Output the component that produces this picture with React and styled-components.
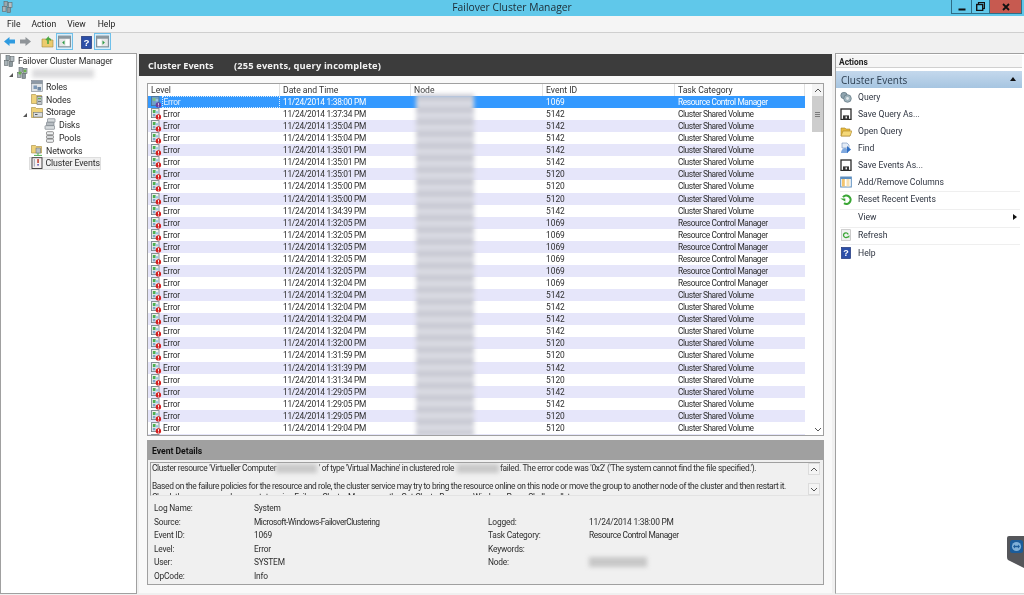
import React from "react";
import styled, { createGlobalStyle } from "styled-components";

const Global = createGlobalStyle`
  html, body { margin: 0; padding: 0; width: 1024px; height: 595px; overflow: hidden; background: #f0f0f0; }
  #root { width: 1024px; height: 595px; }
  * { box-sizing: border-box; }
`;

const Window = styled.div`
  position: relative; width: 1024px; height: 595px; overflow: hidden;
  background: #f0f0f0; color: #222; filter: blur(0.3px);
  font-family: Roboto, "Open Sans", "Liberation Sans", sans-serif;
  font-size: 8.4px; line-height: 12px;
`;
const TitleBar = styled.div`
  position: absolute; left: 0; top: 0; width: 1024px; height: 16px; background: #60c8ea;
  text-align: center; font-size: 10.3px; line-height: 15px; color: #1c2a33;
  font-family: "Open Sans", sans-serif;
`;
const TitleIcon = styled.span`position: absolute; left: 2px; top: 1px; width: 12px; height: 12px;`;
const WindowButtons = styled.div`
  position: absolute; left: 951px; top: 0; width: 71px; height: 14px; display: flex;
  border: 1px solid #2e6d86; border-top: 0;
`;
const WindowButton = styled.span`
  width: ${p => p.$w}px; background: ${p => p.$bg}; display: flex; align-items: center; justify-content: center;
  border-right: ${p => p.$last ? 0 : "1px solid #2e6d86"};
`;
const MenuBar = styled.div`
  position: absolute; left: 0; top: 16px; width: 1024px; height: 17px; background: #f5f5f5;
  border-bottom: 1px solid #cfcfcf; display: flex; padding-left: 7px; font-size: 8.6px; line-height: 16px;
`;
const MenuItem = styled.span`margin-right: ${p => p.$gap}px;`;
const Toolbar = styled.div`position: absolute; left: 0; top: 33px; width: 1024px; height: 20px; background: #f0f0f0;`;
const ToolSlot = styled.span`
  position: absolute; left: ${p => p.$x}px; top: ${p => p.$y ?? 0}px; width: ${p => p.$w ?? 16}px; height: ${p => p.$w ?? 16}px;
  display: block;
  ${p => p.$on ? "background:#d8eefa;border:1px solid #6fc0ea;" : ""}
`;
const TreePanel = styled.div`
  position: absolute; left: 0; top: 53px; width: 137px; height: 541px; background: #fff;
  border: 1px solid #a0a0a0;
`;
const TreeRow = styled.div`
  position: absolute; left: ${p => p.$x}px; top: ${p => p.$y}px; white-space: nowrap; height: 13px; line-height: 13px;
  font-size: 8.8px; color: #2a2a2a; letter-spacing: -0.12px;
`;
const TreeSelection = styled.div`
  position: absolute; left: 28px; top: 103px; width: 72px; height: 13px; background: #f0f0f0; border: 1px solid #dedede;
`;
const TreeIcon = styled.span`position: absolute; left: ${p => p.$x}px; top: ${p => p.$y}px; width: 12px; height: 12px; display: block;`;
const Expander = styled.span`
  position: absolute; left: ${p => p.$x}px; top: ${p => p.$y}px; width: 0; height: 0;
  border-left: 4px solid transparent; border-bottom: 4px solid #555;
`;
const Blur = styled.span`
  position: absolute; left: ${p => p.$x}px; top: ${p => p.$y}px; width: ${p => p.$w}px; height: ${p => p.$h}px;
  background: ${p => p.$c ?? "#c9c9cd"}; filter: blur(2px);
`;
const NodeSmear = styled.div`
  position: absolute; left: 268px; top: 10px; width: 58px; height: 342px; filter: blur(2px);
  background: repeating-linear-gradient(#d2d3dc 0, #c4c5cf 5px, #e2e3ea 9px, #d2d3dc 12px);
`;
const Center = styled.div`position: absolute; left: 139px; top: 54px; width: 693px; height: 541px; background: #f0f0f0;`;
const Banner = styled.div`
  position: absolute; left: 0; top: 0; width: 693px; height: 22px; background: #3c3c3c; color: #f2f2f2;
  font-family: "Open Sans", sans-serif; font-weight: 700; font-size: 9.2px; line-height: 24px; padding-left: 9px; white-space: pre;
`;
const BannerNote = styled.span`position: absolute; left: 95px; top: 0; letter-spacing: 0.15px; font-size: 9.3px;`;
const Content = styled.div`position: absolute; left: 0; top: 22px; width: 693px; height: 517px; background: #f9f9f9;`;
const TableBox = styled.div`
  position: absolute; left: 8px; top: 7px; width: 677px; height: 353px; border: 1px solid #a0a0a0; background: #fff; overflow: hidden;
`;
const HeaderCell = styled.div`
  position: absolute; top: 0; left: ${p => p.$x}px; width: ${p => p.$w}px; height: 12px; line-height: 12px;
  padding-left: 3px; background: #fff; border-right: 1px solid #e2e2e2; font-size: 8.6px; color: #333;
`;
const Row = styled.div`
  position: absolute; left: 0; top: ${p => p.$y}px; width: 657px; height: 12px; line-height: 12.5px; font-size: 8.4px; overflow: hidden;
  background: ${p => p.$sel ? "#3399ff" : p.$alt ? "#e6e6fa" : "#fff"};
  color: ${p => p.$sel ? "#fff" : "#2e2e2e"};
`;
const Cell = styled.span`position: absolute; left: ${p => p.$x}px; top: 0; white-space: nowrap; letter-spacing: ${p => p.$ls ?? 0}px;`;
const SelText = styled.span`
  position: absolute; left: 14px; top: 0; width: 118px; height: 12px; line-height: 11px; padding-left: 0.5px; color: #e8f2ff; letter-spacing: -0.2px;
  border: 1px dotted #d9ecff;
`;
const RowIcon = styled.svg`position: absolute; left: 3px; top: 0; width: 12px; height: 12px; z-index: 2;`;
const Scroll = styled.div`
  position: absolute; left: ${p => p.$x}px; top: ${p => p.$y}px; width: ${p => p.$w}px; height: ${p => p.$h}px;
  background: ${p => p.$bg ?? "#fff"}; border: ${p => p.$b ?? 0};
  display: flex; align-items: center; justify-content: center;
`;
const Details = styled.div`
  position: absolute; left: 8px; top: 364px; width: 677px; height: 145px; background: #f0f0f0; border: 1px solid #a0a0a0;
`;
const DetailHead = styled.div`
  position: absolute; left: 0; top: 0; width: 675px; height: 19px; background: #a0a0a0; color: #111; font-weight: 700;
  font-size: 8.6px; line-height: 20px; padding-left: 4px;
`;
const Message = styled.div`
  position: absolute; left: 2px; top: 21px; width: 670px; height: 34px; overflow: hidden; background: #f0f0f0;
  border-top: 1px solid #a0a0a0; border-left: 1px solid #a0a0a0; border-bottom: 1px solid #e3e3e3;
  font-size: 8.4px; line-height: 9px; color: #2e2e2e;
`;
const MessageLine = styled.div`
  position: absolute; left: ${p => p.$x ?? 1}px; top: ${p => p.$y}px; white-space: nowrap; letter-spacing: ${p => p.$ls ?? -0.3}px;
`;
const Field = styled.div`
  position: absolute; left: ${p => p.$x}px; top: ${p => p.$y}px; white-space: nowrap; font-size: 8.4px; color: #2e2e2e; letter-spacing: ${p => p.$ls ?? -0.2}px;
`;
const Actions = styled.div`
  position: absolute; left: 835px; top: 53px; width: 189px; height: 541px; background: #fff;
  border: 1px solid #a0a0a0; border-right: 0; border-bottom: 1px solid #d8d8d8;
`;
const ActionsTitle = styled.div`
  position: absolute; left: 0; top: 1px; width: 186px; height: 13px; background: #f5f5f5; font-weight: 700; font-size: 8.4px; line-height: 14px;
  padding-left: 3px; color: #222; border-bottom: 1px solid #d0d0d0;
`;
const ActionsHead = styled.div`
  position: absolute; left: 0; top: 17px; width: 186px; height: 17px; background: linear-gradient(#c4d8ec, #a6c5e1);
  font-family: "Open Sans", sans-serif; font-size: 10px; line-height: 18px; padding-left: 5px; color: #2c3e50;
`;
const UpTri = styled.span`
  position: absolute; left: 174px; top: 6px; width: 0; height: 0; border-left: 3.5px solid transparent; border-right: 3.5px solid transparent; border-bottom: 4px solid #111;
`;
const ActionRow = styled.div`
  position: absolute; left: 22px; top: ${p => p.$y}px; height: 12px; line-height: 12px; white-space: nowrap; font-size: 8.6px; color: #2e3440;
`;
const ActionIcon = styled.span`position: absolute; left: 4px; top: ${p => p.$y}px; width: 12px; height: 12px; display: block;`;
const ActionSep = styled.div`position: absolute; left: 4px; top: ${p => p.$y}px; width: 180px; height: 1px; background: #efefef;`;
const RightTri = styled.span`
  position: absolute; left: 177px; top: 160px; width: 0; height: 0; border-top: 3px solid transparent; border-bottom: 3px solid transparent; border-left: 4px solid #111;
`;
const Badge = styled.svg`position: absolute; left: 1006px; top: 536px; width: 18px; height: 33px;`;

const I = ({ children, s = 12 }) => <svg width={s} height={s} viewBox="0 0 12 12" style={{ display: "block" }}>{children}</svg>;

const Servers = () => <I>
  <rect x="2" y="0.5" width="3.5" height="5" fill="#9aa7ad" stroke="#5f686c" strokeWidth=".6"/>
  <rect x="6.5" y="1.5" width="3.5" height="5" fill="#b6bfc3" stroke="#5f686c" strokeWidth=".6"/>
  <rect x="0.5" y="5.5" width="3.5" height="5" fill="#aab4b8" stroke="#5f686c" strokeWidth=".6"/>
  <rect x="5" y="6.5" width="3.5" height="5" fill="#8d999e" stroke="#5f686c" strokeWidth=".6"/>
</I>;
const ServersGreen = () => <I>
  <rect x="2" y="0.5" width="3.5" height="5" fill="#9aa7ad" stroke="#5f686c" strokeWidth=".6"/>
  <rect x="6.5" y="1.5" width="3.5" height="5" fill="#b6bfc3" stroke="#5f686c" strokeWidth=".6"/>
  <rect x="0.5" y="5.5" width="3.5" height="5" fill="#aab4b8" stroke="#5f686c" strokeWidth=".6"/>
  <rect x="5" y="6.5" width="3.5" height="5" fill="#8d999e" stroke="#5f686c" strokeWidth=".6"/>
  <circle cx="3" cy="6" r="1.6" fill="#6ab04c"/><circle cx="8" cy="4" r="1.4" fill="#6ab04c"/>
</I>;
const RolesIcon = () => <I>
  <rect x="0.5" y="0.5" width="11" height="3.2" fill="#8d99a6" stroke="#6e7780" strokeWidth=".5"/>
  <rect x="0.5" y="3.5" width="11" height="8" fill="#dfe3e6" stroke="#7b848c" strokeWidth=".6"/>
  <rect x="2.5" y="5.5" width="3.5" height="3.5" fill="#7d98b5"/><rect x="6.5" y="7" width="3.5" height="3.5" fill="#6f88a3"/>
</I>;
const NodesIcon = () => <I>
  <path d="M.5 1.5h4l1 1h5v8H.5z" fill="#efd27a" stroke="#a58a3c" strokeWidth=".6"/>
  <rect x="6" y="3.5" width="5" height="8" fill="#c2c8cc" stroke="#5f686c" strokeWidth=".6"/>
  <rect x="7" y="5" width="3" height="1.2" fill="#6ab04c"/><rect x="7" y="8" width="3" height="1" fill="#777"/>
</I>;
const StorageIcon = () => <I>
  <path d="M.5 1.5h4l1 1h6v9H.5z" fill="#efd27a" stroke="#a58a3c" strokeWidth=".6"/>
  <rect x="2.5" y="6.5" width="9" height="4.5" fill="#d8dcdf" stroke="#6e7780" strokeWidth=".6"/>
  <rect x="4" y="8" width="2.5" height="1" fill="#555"/>
</I>;
const DisksIcon = () => <I>
  <rect x="3.5" y="0.7" width="7.5" height="3.6" rx=".5" fill="#d8dcdf" stroke="#6e7780" strokeWidth=".6"/>
  <rect x="2.5" y="4.2" width="7.5" height="3.6" rx=".5" fill="#b6bcc1" stroke="#6e7780" strokeWidth=".6"/>
  <rect x="1" y="7.7" width="9.5" height="3.6" rx=".5" fill="#d8dcdf" stroke="#6e7780" strokeWidth=".6"/>
</I>;
const PoolsIcon = () => <I>
  <rect x="2.5" y="0.7" width="7" height="3.2" rx="1" fill="#eef0f1" stroke="#666" strokeWidth=".7"/>
  <rect x="2.5" y="4.4" width="7" height="3.2" rx="1" fill="#d5d8da" stroke="#666" strokeWidth=".7"/>
  <rect x="2.5" y="8.1" width="7" height="3.2" rx="1" fill="#eef0f1" stroke="#666" strokeWidth=".7"/>
</I>;
const NetworksIcon = () => <I>
  <path d="M.5 1.5h4l1 1h5v6.5H.5z" fill="#efd27a" stroke="#a58a3c" strokeWidth=".6"/>
  <rect x="5" y="4" width="4.5" height="5" fill="#b9c0c4" stroke="#5f686c" strokeWidth=".5"/>
  <path d="M7 9v2M3 11.4h8" stroke="#4caf50" strokeWidth="1"/>
</I>;
const EventsIcon = () => <I>
  <rect x="1" y="0.7" width="10" height="10.8" fill="#f6f1f1" stroke="#333" strokeWidth=".9"/>
  <rect x="2.8" y="2" width="1" height="7.5" fill="#9aa0b0"/>
  <rect x="6.3" y="2" width="1.5" height="4" fill="#c0392b"/>
  <rect x="6.3" y="7" width="1.5" height="1.6" fill="#5b4fb0"/>
</I>;

const HelpIcon = ({ s = 12 }) => <svg width={s} height={s} viewBox="0 0 12 12" style={{ display: "block" }}>
  <rect x="1.5" y="0.5" width="9" height="11" fill="#2c4fa8" stroke="#1c3278" strokeWidth=".7"/>
  <text x="6" y="9.4" textAnchor="middle" fontSize="9" fontWeight="700" fill="#fff" fontFamily="Liberation Sans">?</text>
</svg>;
const PanelIcon = ({ arrow }) => <svg width="15" height="15" viewBox="0 0 14 14" style={{ display: "block" }}>
  <rect x="1.5" y="2" width="11" height="10" fill="#e7e7e7" stroke="#7c8a92"/>
  <rect x="1.5" y="2" width="11" height="2.4" fill="#8b979e"/>
  <rect x={arrow === "l" ? 8 : 2.5} y="5" width="3.5" height="6" fill="#fff"/>
  <path d={arrow === "l" ? "M7 6v4L4.8 8z" : "M7 6v4L9.2 8z"} fill="#2f9d46"/>
</svg>;
const SaveIcon = () => <I>
  <rect x="1" y="1" width="10" height="10.5" fill="#fff" stroke="#2a2a2a" strokeWidth="1.3"/>
  <rect x="3" y="7.4" width="6" height="4" fill="#333"/>
  <rect x="5.5" y="8.4" width="1.5" height="2" fill="#eee"/>
</I>;

const ErrIcon = () => <RowIcon viewBox="0 0 12 12">
  <rect x="0.5" y="0.6" width="7.5" height="9" fill="#eef1ee" stroke="#6d7a80" strokeWidth=".8"/>
  <rect x="1.8" y="2" width="2.8" height="3" fill="#4caf50"/>
  <rect x="4.6" y="3.2" width="2.6" height="2.2" fill="#9cc7e3"/>
  <rect x="1.8" y="5.8" width="2.6" height="2.6" fill="#7da6c8"/>
  <circle cx="7.4" cy="8.9" r="2.7" fill="#d42020"/>
  <rect x="7" y="7.1" width=".9" height="2.2" fill="#fff"/><rect x="7" y="9.8" width=".9" height=".8" fill="#fff"/>
</RowIcon>;
const ErrIconSel = () => <RowIcon viewBox="0 0 12 12">
  <rect x="0.5" y="0.6" width="7.5" height="9" fill="#6f9fc9" stroke="#4d6f8c" strokeWidth=".8"/>
  <rect x="1.8" y="2" width="2.8" height="3" fill="#7fbf7f"/>
  <rect x="4.6" y="3.2" width="2.6" height="2.2" fill="#9cc7e3"/>
  <circle cx="7.4" cy="8.9" r="2.7" fill="#6a3fa0"/>
  <rect x="7" y="7.1" width=".9" height="2.2" fill="#ddd"/><rect x="7" y="9.8" width=".9" height=".8" fill="#ddd"/>
</RowIcon>;

const rows = [
  ["1:38:00","1069"],["1:37:34","5142"],["1:35:04","5142"],["1:35:04","5142"],["1:35:01","5142"],["1:35:01","5142"],
  ["1:35:01","5120"],["1:35:00","5120"],["1:35:00","5120"],["1:34:39","5142"],["1:32:05","1069"],["1:32:05","1069"],
  ["1:32:05","1069"],["1:32:05","1069"],["1:32:05","1069"],["1:32:04","1069"],["1:32:04","5142"],["1:32:04","5142"],
  ["1:32:04","5142"],["1:32:04","5142"],["1:32:00","5120"],["1:31:59","5120"],["1:31:39","5142"],["1:31:34","5120"],
  ["1:29:05","5142"],["1:29:05","5142"],["1:29:05","5120"],["1:29:04","5120"],
];
const Chevron = ({ up }) => <svg width="8" height="5" viewBox="0 0 8 5"><path d={up ? "M1 4l3-3 3 3" : "M1 1l3 3 3-3"} fill="none" stroke="#555" strokeWidth="1"/></svg>;

const actionItems = [
  ["Query", 37, "query"],["Save Query As...", 54, "save"],["Open Query", 71, "open"],["Find", 88, "find"],
  ["Save Events As...", 105, "save"],["Add/Remove Columns", 122, "cols"],["Reset Recent Events", 139, "reset"],
  ["View", 157, null],["Refresh", 175, "refresh"],["Help", 193, "help"],
];
const actionIcon = k => ({
  query: <I><circle cx="4" cy="4.5" r="3.2" fill="#8ea3ae" stroke="#5f7480" strokeWidth=".7"/><circle cx="7.5" cy="7.5" r="3.8" fill="#9fb3bc" stroke="#5f7480" strokeWidth=".7"/><circle cx="7.5" cy="7.5" r="1.4" fill="#dfe6ea"/></I>,
  save: <SaveIcon />,
  open: <I><path d="M1 3h4l1 1h4v7H1z" fill="#e6b93c" stroke="#a8842a" strokeWidth=".6"/><path d="M1 11l2-5h9l-2 5z" fill="#f5d878" stroke="#a8842a" strokeWidth=".6"/></I>,
  find: <I><path d="M2 1h5l2 2v3H2z" fill="#e4ecf6" stroke="#6f8fb8" strokeWidth=".6"/><path d="M1 11c0-3 2-5 4-5s3 2 3 5z" fill="#7fa8de"/><path d="M7 4l4 3.5-4 3.5z" fill="#2f6fc4"/></I>,
  cols: <I><rect x=".7" y="1" width="10.6" height="10" fill="#fff" stroke="#5e8fc0"/><rect x=".7" y="1" width="10.6" height="2" fill="#5e8fc0"/><rect x="2" y="3" width="2.8" height="7.5" fill="#f3c46d"/><rect x="6.5" y="3" width="3" height="7.5" fill="#f7e0b0"/></I>,
  reset: <I><path d="M3 4.2A4.2 4.2 0 1 1 4 10.2" fill="none" stroke="#3aa635" strokeWidth="2.1"/><path d="M.3 5.5h5v3z" fill="#3aa635"/></I>,
  refresh: <I><rect x="1.5" y=".7" width="9" height="10.6" fill="#f2f2f2" stroke="#b8b8b8" strokeWidth=".7"/><path d="M8.2 5.5a2.4 2.4 0 1 0-.5 2.3" fill="none" stroke="#3aa635" strokeWidth="1.3"/><path d="M6.8 8.5h2.6V6z" fill="#3aa635"/></I>,
  help: <HelpIcon />,
}[k]);

export default function App() {
  return (
    <Window>
      <Global />
      <TitleBar>
        <TitleIcon><Servers /></TitleIcon>
        Failover Cluster Manager
        <WindowButtons>
          <WindowButton $w={20} $bg="#60c8ea"><svg width="8" height="8" viewBox="0 0 8 8"><rect x="0.5" y="5.5" width="7" height="2" fill="#111"/></svg></WindowButton>
          <WindowButton $w={18} $bg="#60c8ea"><svg width="9" height="9" viewBox="0 0 9 9"><rect x="2.5" y=".5" width="6" height="6" fill="none" stroke="#111" strokeWidth="1.2"/><rect x=".7" y="2.5" width="6" height="6" fill="#60c8ea" stroke="#111" strokeWidth="1.4"/></svg></WindowButton>
          <WindowButton $w={31} $bg="#c75a50" $last><svg width="8" height="8" viewBox="0 0 8 8"><path d="M1 1l6 6M7 1l-6 6" stroke="#111" strokeWidth="1.8"/></svg></WindowButton>
        </WindowButtons>
      </TitleBar>
      <MenuBar>
        <MenuItem $gap={11}>File</MenuItem><MenuItem $gap={11}>Action</MenuItem><MenuItem $gap={12}>View</MenuItem><MenuItem $gap={0}>Help</MenuItem>
      </MenuBar>
      <Toolbar>
        <ToolSlot $x={3} $y={2}><svg width="13" height="13" viewBox="0 0 13 13"><path d="M1 6.5L6.5 2v2.6H12v3.8H6.5V11z" fill="#2f9be0"/></svg></ToolSlot>
        <ToolSlot $x={19} $y={2}><svg width="13" height="13" viewBox="0 0 13 13"><path d="M12 6.5L6.5 2v2.6H1v3.8h5.5V11z" fill="#8f9498"/></svg></ToolSlot>
        <ToolSlot $x={41} $y={2}><svg width="14" height="14" viewBox="0 0 14 14"><path d="M1 4h4l1 1h6v7H1z" fill="#eccb6e" stroke="#a58a3c" strokeWidth=".6"/><path d="M7 9V3L5 5M7 3l3 2" fill="none" stroke="#4aa842" strokeWidth="1.6"/></svg></ToolSlot>
        <ToolSlot $x={56} $y={0} $w={17} $on><PanelIcon arrow="l" /></ToolSlot>
        <ToolSlot $x={80} $y={3}><HelpIcon s={13} /></ToolSlot>
        <ToolSlot $x={94} $y={0} $w={17} $on><PanelIcon arrow="r" /></ToolSlot>
      </Toolbar>
      <TreePanel>
        <TreeIcon $x={3} $y={1}><Servers /></TreeIcon>
        <TreeRow $x={17} $y={1}>Failover Cluster Manager</TreeRow>
        <Expander $x={8} $y={19} />
        <TreeIcon $x={16} $y={13}><ServersGreen /></TreeIcon>
        <Blur $x={31} $y={15} $w={62} $h={9} $c="#dcdcde" />
        <TreeIcon $x={30} $y={26}><RolesIcon /></TreeIcon>
        <TreeRow $x={45} $y={27}>Roles</TreeRow>
        <TreeIcon $x={30} $y={39}><NodesIcon /></TreeIcon>
        <TreeRow $x={45} $y={40}>Nodes</TreeRow>
        <Expander $x={22} $y={59} />
        <TreeIcon $x={30} $y={52}><StorageIcon /></TreeIcon>
        <TreeRow $x={45} $y={52}>Storage</TreeRow>
        <TreeIcon $x={43} $y={64}><DisksIcon /></TreeIcon>
        <TreeRow $x={58} $y={65}>Disks</TreeRow>
        <TreeIcon $x={43} $y={77}><PoolsIcon /></TreeIcon>
        <TreeRow $x={58} $y={78}>Pools</TreeRow>
        <TreeIcon $x={30} $y={90}><NetworksIcon /></TreeIcon>
        <TreeRow $x={45} $y={91}>Networks</TreeRow>
        <TreeSelection />
        <TreeIcon $x={30} $y={103}><EventsIcon /></TreeIcon>
        <TreeRow $x={44.5} $y={103}>Cluster Events</TreeRow>
      </TreePanel>
      <Center>
        <Banner>Cluster Events<BannerNote>(255 events, query incomplete)</BannerNote></Banner>
        <Content>
          <TableBox>
            <HeaderCell $x={0} $w={132}>Level</HeaderCell>
            <HeaderCell $x={132} $w={131}>Date and Time</HeaderCell>
            <HeaderCell $x={263} $w={132}>Node</HeaderCell>
            <HeaderCell $x={395} $w={132}>Event ID</HeaderCell>
            <HeaderCell $x={527} $w={130}>Task Category</HeaderCell>
            {rows.map((r, i) => (
              <Row key={i} $y={12 + i * 12.07} $sel={i === 0} $alt={i % 2 === 0}>
                {i === 0 ? <ErrIconSel /> : <ErrIcon />}
                {i === 0 ? <SelText>Error</SelText> : <Cell $x={15} $ls={-0.2}>Error</Cell>}
                <Cell $x={135} $ls={-0.28}>11/24/2014 {r[0]} PM</Cell>
                <Cell $x={398}>{r[1]}</Cell>
                <Cell $x={530} $ls={r[1] === "1069" ? -0.4 : -0.45}>{r[1] === "1069" ? "Resource Control Manager" : "Cluster Shared Volume"}</Cell>
              </Row>
            ))}
            <Row $y={350} $alt><ErrIcon /></Row>
            <NodeSmear />
            <Scroll $x={664} $y={0} $w={11} $h={351} $bg="#fff" />
            <Scroll $x={664} $y={0} $w={11} $h={12} $bg="#f4f4f4"><Chevron up /></Scroll>
            <Scroll $x={664} $y={12} $w={11} $h={36} $bg="#cdcdcd"><svg width="5" height="5" viewBox="0 0 5 5"><path d="M0 .5h5M0 2.5h5M0 4.5h5" stroke="#666" strokeWidth=".8"/></svg></Scroll>
            <Scroll $x={664} $y={339} $w={11} $h={12}><Chevron /></Scroll>
          </TableBox>
          <Details>
            <DetailHead>Event Details</DetailHead>
            <Message>
              <MessageLine $y={1} $ls={-0.35}>Cluster resource 'Virtueller Computer</MessageLine>
              <MessageLine $x={168} $y={1} $ls={-0.42}>' of type 'Virtual Machine' in clustered role</MessageLine>
              <MessageLine $x={349} $y={1}>failed. The error code was '0x2' ('The system cannot find the file specified.').</MessageLine>
              <MessageLine $y={19} $ls={-0.35}>Based on the failure policies for the resource and role, the cluster service may try to bring the resource online on this node or move the group to another node of the cluster and then restart it.</MessageLine>
              <MessageLine $y={30} $ls={-0.35}>Check the resource and group state using Failover Cluster Manager or the Get-ClusterResource Windows PowerShell cmdlet.</MessageLine>
              <Blur $x={125} $y={1} $w={41} $h={9} $c="#c8c8c8" />
              <Blur $x={306} $y={1} $w={42} $h={9} $c="#c8c8c8" />
              <Scroll $x={657} $y={0} $w={12} $h={12} $bg="#f4f4f4" $b="1px solid #dcdcdc"><Chevron up /></Scroll>
              <Scroll $x={657} $y={20} $w={12} $h={12} $bg="#f4f4f4" $b="1px solid #dcdcdc"><Chevron /></Scroll>
            </Message>
            <Field $x={6} $y={61}>Log Name:</Field><Field $x={106} $y={61}>System</Field>
            <Field $x={6} $y={75}>Source:</Field><Field $x={106} $y={75} $ls={-0.45}>Microsoft-Windows-FailoverClustering</Field>
            <Field $x={6} $y={88}>Event ID:</Field><Field $x={106} $y={88}>1069</Field>
            <Field $x={6} $y={102}>Level:</Field><Field $x={106} $y={102}>Error</Field>
            <Field $x={6} $y={115}>User:</Field><Field $x={106} $y={115}>SYSTEM</Field>
            <Field $x={6} $y={129}>OpCode:</Field><Field $x={106} $y={129}>Info</Field>
            <Field $x={340} $y={75}>Logged:</Field><Field $x={441} $y={75}>11/24/2014 1:38:00 PM</Field>
            <Field $x={340} $y={88}>Task Category:</Field><Field $x={441} $y={88} $ls={-0.4}>Resource Control Manager</Field>
            <Field $x={340} $y={102}>Keywords:</Field>
            <Field $x={340} $y={115}>Node:</Field>
            <Blur $x={441} $y={116} $w={58} $h={10} $c="#c8c8c8" />
          </Details>
        </Content>
      </Center>
      <Actions>
        <ActionsTitle>Actions</ActionsTitle>
        <ActionsHead>Cluster Events<UpTri /></ActionsHead>
        {actionItems.map(([t, y, k]) => (
          <React.Fragment key={t}>
            {k && <ActionIcon $y={y}>{actionIcon(k)}</ActionIcon>}
            <ActionRow $y={y}>{t}</ActionRow>
          </React.Fragment>
        ))}
        <ActionSep $y={137} /><ActionSep $y={155} /><ActionSep $y={173} /><ActionSep $y={190} />
        <RightTri />
      </Actions>
      <Badge viewBox="0 0 18 33">
        <path d="M3 0H18V32L2 24Q1 23 1 21V2Q1 0 3 0z" fill="#55565a"/>
        <rect x="4" y="4" width="13" height="13" rx="2.5" fill="#1b5c9a"/>
        <circle cx="10.5" cy="10.5" r="4.6" fill="#7fb0d8"/>
        <path d="M7 10.5l2-2v1.2h3V8.5l2 2-2 2v-1.2H9v1.2z" fill="#1b5c9a"/>
      </Badge>
    </Window>
  );
}
